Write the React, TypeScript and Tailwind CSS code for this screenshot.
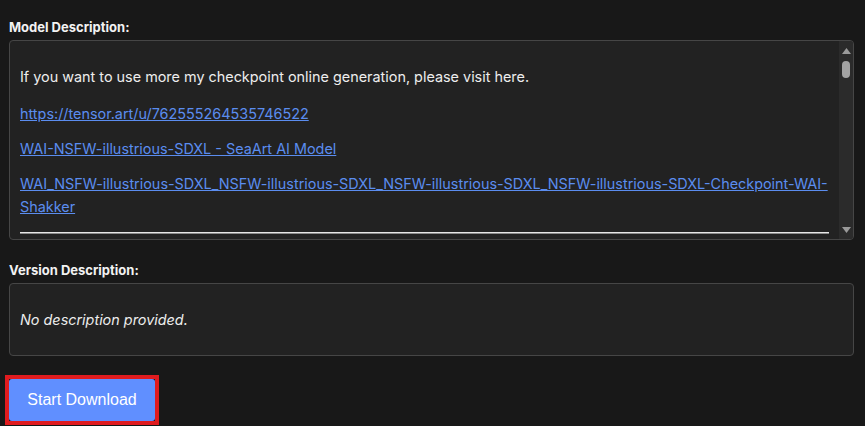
import React from 'react';

const links = [
  'https://tensor.art/u/762555264535746522',
  'WAI-NSFW-illustrious-SDXL - SeaArt AI Model',
  'WAI_NSFW-illustrious-SDXL_NSFW-illustrious-SDXL_NSFW-illustrious-SDXL_NSFW-illustrious-SDXL-Checkpoint-WAI-Shakker',
];

// Fake dark-mode scrollbar (arrows + thumb)
function ScrollRail() {
  return (
    <div className="flex w-[14px] shrink-0 flex-col items-center bg-[#2b2b2b]">
      <svg width="9" height="6" viewBox="0 0 9 6" className="mt-[7px]">
        <polygon points="4.5,0 9,6 0,6" fill="#9a9a9a" />
      </svg>
      <div className="mt-[7px] h-[17px] w-[8px] rounded-full bg-[#a3a3a3]" />
      <div className="flex-1" />
      <svg width="9" height="6" viewBox="0 0 9 6" className="mb-[6px]">
        <polygon points="0,0 9,0 4.5,6" fill="#9a9a9a" />
      </svg>
    </div>
  );
}

export default function App() {
  return (
    <div className="min-h-[426px] w-full bg-[#181818] px-[9px] pt-[19px] font-['Inter',sans-serif] text-[#ededed]">
      <div className="mb-[5px] text-[13px] font-bold leading-[16px] text-[#f2f2f2]">Model Description:</div>
      <div className="flex h-[200px] w-[845px] overflow-hidden rounded-[4px] border border-[#464646] bg-[#222222]">
        <div className="flex-1 overflow-hidden px-[10px] pt-[12px] text-[14.4px] leading-[23px]">
          <p className="mb-[14px] mt-[12px]">If you want to use more my checkpoint online generation, please visit here.</p>
          {links.map((l) => (
            <p key={l} className="my-[12px]">
              <a href="#" className="text-[#5b8def] underline">
                {l}
              </a>
            </p>
          ))}
          <div className="mt-[14px] border-t border-b border-t-[#e6e6e6] border-b-[#8a8a8a]" />
        </div>
        <ScrollRail />
      </div>

      <div className="mb-[5px] mt-[22px] text-[13px] font-bold leading-[16px] text-[#f2f2f2]">Version Description:</div>
      <div className="w-[845px] rounded-[4px] border border-[#464646] bg-[#222222] px-[10px] py-[24px] text-[14.4px] italic leading-[23px]">
        No description provided.
      </div>

      <div className="-ml-[4px] mt-[19px] inline-block border-4 border-[#e01b1f]">
        <button className="block h-[42px] w-[146px] rounded-[3px] bg-[#608fff] font-['Liberation_Sans',Arial,sans-serif] text-[16px] text-white">
          Start Download
        </button>
      </div>
    </div>
  );
}
